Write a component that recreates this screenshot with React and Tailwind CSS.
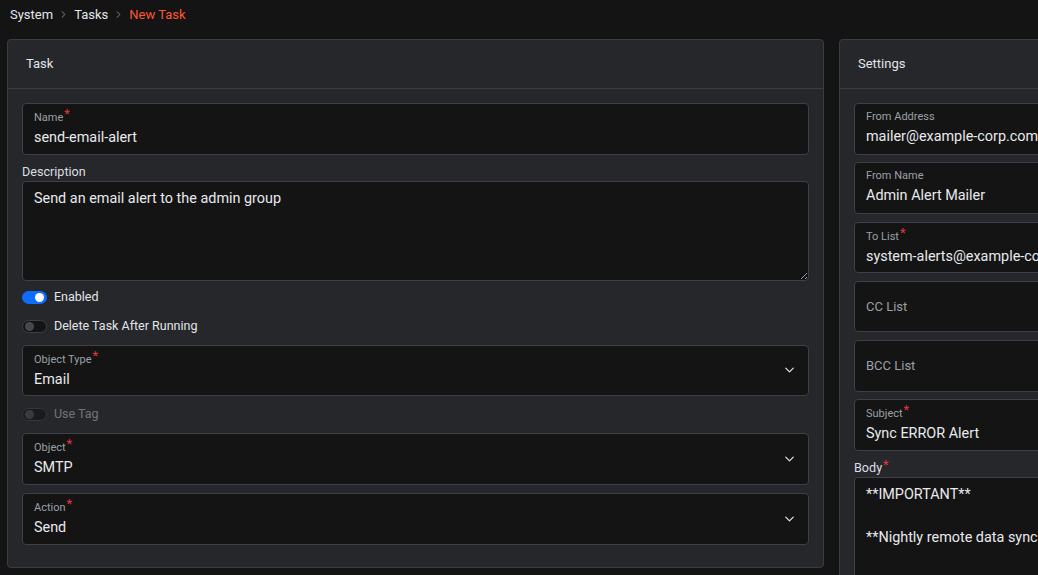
import { ChevronDown, ChevronRight } from 'lucide-react'

function Req() {
  return <span className="text-[#e5383b] text-[13px] leading-none relative -top-[3px] ml-[1px]">*</span>
}

function Field({ label, value, required, select }) {
  return (
    <div className="relative h-[51.5px] shrink-0 rounded-[4px] border border-[#3d4046] bg-[#141414] px-[11px] flex flex-col">
      {value ? (
        <div className="pt-[6px]">
          <div className="text-[11px] leading-[14px] text-[#9aa0a6]">
            {label}
            {required && <Req />}
          </div>
          <div className="mt-[3px] text-[14.4px] leading-[20px] text-[#e8eaed] whitespace-nowrap overflow-hidden">{value}</div>
        </div>
      ) : (
        <div className="h-full flex items-center text-[13px] leading-[18px] text-[#9aa0a6]">{label}</div>
      )}
      {select && (
        <ChevronDown size={15} strokeWidth={2} className="absolute right-[11px] top-1/2 -translate-y-1/2 text-[#dfe1e5]" />
      )}
    </div>
  )
}

function Toggle({ on, label, disabled }) {
  return (
    <div className={`h-[24px] flex items-center gap-[7px] ${disabled ? 'opacity-60' : ''}`}>
      <div
        className={`w-[25px] h-[13px] rounded-full border flex items-center px-[2px] ${
          on ? 'bg-[#0d6efd] border-[#0d6efd] justify-end' : 'bg-[#141414] border-[#3d4046] justify-start'
        }`}
      >
        <div className={`w-[9px] h-[9px] rounded-full ${on ? 'bg-white' : 'bg-[#45484d]'}`} />
      </div>
      <span className={`text-[12.5px] ${disabled ? 'text-[#a3a8ad]' : 'text-[#e3e5e8]'}`}>{label}</span>
    </div>
  )
}

function Area({ label, required, value, height }) {
  return (
    <div className="flex flex-col">
      <div className="h-[18px] text-[12.6px] leading-[18px] text-[#dcdee1]">
        {label}
        {required && <Req />}
      </div>
      <textarea
        readOnly
        value={value}
        style={{ height }}
        className="w-full rounded-[4px] border border-[#3d4046] bg-[#141414] px-[11px] py-[6px] text-[14.4px] leading-[21.5px] text-[#e8eaed] outline-none resize-y [color-scheme:dark]"
      />
    </div>
  )
}

function Panel({ title, width, children }) {
  return (
    <div className={`${width} shrink-0 rounded-[4px] border border-[#3a3d42] bg-[#25272b]`}>
      <div className="h-[49px] flex items-center px-[18px] border-b border-[#3a3d42] text-[13px] text-[#e3e5e8]">
        {title}
      </div>
      <div className="px-[14px] pt-[14px] pb-[22px] flex flex-col">{children}</div>
    </div>
  )
}

export default function App() {
  return (
    <div className="w-[1038px] h-[575px] overflow-hidden bg-[#141414] font-['Roboto','Liberation_Sans',sans-serif]">
      <div className="h-[29px] flex items-center pl-[10px] text-[13px]">
        <span className="text-[#e3e5e8]">System</span>
        <ChevronRight size={11} className="mx-[5px] text-[#8a8d91]" />
        <span className="text-[#e3e5e8]">Tasks</span>
        <ChevronRight size={11} className="mx-[5px] text-[#8a8d91]" />
        <span className="text-[#ff5533]">New Task</span>
      </div>
      <div className="flex items-start gap-[15px] pl-[7px] pt-[10px]">
        <Panel title="Task" width="w-[817px]">
          <Field label="Name" required value="send-email-alert" />
          <div className="mt-[8px]">
            <Area label="Description" value="Send an email alert to the admin group" height="100px" />
          </div>
          <div className="mt-[5px]">
            <Toggle on label="Enabled" />
          </div>
          <div className="mt-[5px]">
            <Toggle label="Delete Task After Running" />
          </div>
          <div className="mt-[6px] flex flex-col">
            <Field label="Object Type" required value="Email" select />
          </div>
          <div className="mt-[6px]">
            <Toggle label="Use Tag" disabled />
          </div>
          <div className="mt-[7px] flex flex-col gap-[8.5px]">
            <Field label="Object" required value="SMTP" select />
            <Field label="Action" required value="Send" select />
          </div>
        </Panel>
        <Panel title="Settings" width="w-[430px]">
          <div className="flex flex-col gap-[7.8px]">
            <Field label="From Address" value="mailer@example-corp.com" />
            <Field label="From Name" value="Admin Alert Mailer" />
            <Field label="To List" required value="system-alerts@example-corp.com" />
            <Field label="CC List" />
            <Field label="BCC List" />
            <Field label="Subject" required value="Sync ERROR Alert" />
            <Area
              label="Body"
              required
              value={'**IMPORTANT**\n\n**Nightly remote data sync failed**'}
              height="140px"
            />
          </div>
        </Panel>
      </div>
    </div>
  )
}
